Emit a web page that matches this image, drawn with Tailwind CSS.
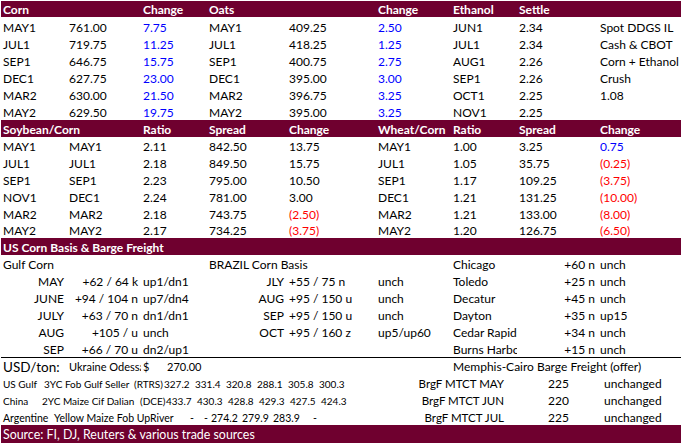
<!DOCTYPE html>
<html lang="en">
<head>
    <meta charset="UTF-8">
    <title>Grain Markets</title>
    <script src="https://cdn.jsdelivr.net/npm/@tailwindcss/browser@4"></script>
</head>
<body class="bg-white w-[682px] h-[444px] overflow-hidden pt-px pl-px font-['Lato','Liberation_Sans',sans-serif] text-[12px] text-black">
    <table class="table-fixed w-[680px] border-collapse [&_td]:p-0 [&_td]:pl-[2px] [&_td]:pr-[3px] [&_td]:align-bottom [&_td]:overflow-hidden [&_td]:whitespace-nowrap [&_td]:leading-[14px]">
        <colgroup>
            <col class="w-[66px]"><col class="w-[74px]"><col class="w-[66px]"><col class="w-[80px]"><col class="w-[89px]"><col class="w-[75px]"><col class="w-[66px]"><col class="w-[81px]"><col class="w-[83px]">
        </colgroup>
        <tbody>
            <!-- futures -->
            <tr class="h-[16px] bg-[#6f002f] text-white font-bold"><td>Corn</td><td></td><td>Change</td><td>Oats</td><td></td><td>Change</td><td>Ethanol</td><td>Settle</td><td></td></tr>
            <tr class="h-[18px]"><td>MAY1</td><td>761.00</td><td class="text-[#0000ff]">7.75</td><td>MAY1</td><td>409.25</td><td class="text-[#0000ff]">2.50</td><td>JUN1</td><td>2.34</td><td>Spot DDGS IL</td></tr>
            <tr class="h-[17px]"><td>JUL1</td><td>719.75</td><td class="text-[#0000ff]">11.25</td><td>JUL1</td><td>418.25</td><td class="text-[#0000ff]">1.25</td><td>JUL1</td><td>2.34</td><td>Cash &amp; CBOT</td></tr>
            <tr class="h-[17px]"><td>SEP1</td><td>646.75</td><td class="text-[#0000ff]">15.75</td><td>SEP1</td><td>400.75</td><td class="text-[#0000ff]">2.75</td><td>AUG1</td><td>2.26</td><td>Corn + Ethanol</td></tr>
            <tr class="h-[17px]"><td>DEC1</td><td>627.75</td><td class="text-[#0000ff]">23.00</td><td>DEC1</td><td>395.00</td><td class="text-[#0000ff]">3.00</td><td>SEP1</td><td>2.26</td><td>Crush</td></tr>
            <tr class="h-[17px]"><td>MAR2</td><td>630.00</td><td class="text-[#0000ff]">21.50</td><td>MAR2</td><td>396.75</td><td class="text-[#0000ff]">3.25</td><td>OCT1</td><td>2.25</td><td>1.08</td></tr>
            <tr class="h-[17px]"><td>MAY2</td><td>629.50</td><td class="text-[#0000ff]">19.75</td><td>MAY2</td><td>395.00</td><td class="text-[#0000ff]">3.25</td><td>NOV1</td><td>2.25</td><td></td></tr>
            <!-- spreads -->
            <tr class="h-[17px] bg-[#6f002f] text-white font-bold"><td colspan="2">Soybean/Corn</td><td>Ratio</td><td>Spread</td><td>Change</td><td>Wheat/Corn</td><td>Ratio</td><td>Spread</td><td>Change</td></tr>
            <tr class="h-[17px]"><td>MAY1</td><td>MAY1</td><td>2.11</td><td>842.50</td><td>13.75</td><td>MAY1</td><td>1.00</td><td>3.25</td><td class="text-[#0000ff]">0.75</td></tr>
            <tr class="h-[17px]"><td>JUL1</td><td>JUL1</td><td>2.18</td><td>849.50</td><td>15.75</td><td>JUL1</td><td>1.05</td><td>35.75</td><td class="text-[#ff0000]">(0.25)</td></tr>
            <tr class="h-[17px]"><td>SEP1</td><td>SEP1</td><td>2.23</td><td>795.00</td><td>10.50</td><td>SEP1</td><td>1.17</td><td>109.25</td><td class="text-[#ff0000]">(3.75)</td></tr>
            <tr class="h-[17px]"><td>NOV1</td><td>DEC1</td><td>2.24</td><td>781.00</td><td>3.00</td><td>DEC1</td><td>1.21</td><td>131.25</td><td class="text-[#ff0000]">(10.00)</td></tr>
            <tr class="h-[17px]"><td>MAR2</td><td>MAR2</td><td>2.18</td><td>743.75</td><td class="text-[#ff0000]">(2.50)</td><td>MAR2</td><td>1.21</td><td>133.00</td><td class="text-[#ff0000]">(8.00)</td></tr>
            <tr class="h-[16px] [&_td]:leading-[12px]"><td>MAY2</td><td>MAY2</td><td>2.17</td><td>734.25</td><td class="text-[#ff0000]">(3.75)</td><td>MAY2</td><td>1.20</td><td>126.75</td><td class="text-[#ff0000]">(6.50)</td></tr>
            <!-- basis and freight -->
            <tr class="h-[17px] bg-[#6f002f] text-white font-bold"><td colspan="9">US Corn Basis &amp; Barge Freight</td></tr>
            <tr class="h-[17px]"><td colspan="3">Gulf Corn</td><td colspan="3">BRAZIL Corn Basis</td><td>Chicago</td><td class="text-right">+60 n</td><td>unch</td></tr>
            <tr class="h-[17px]"><td class="text-right">MAY</td><td class="text-right">+62 / 64 k</td><td>up1/dn1</td><td class="text-right">JLY</td><td>+55 / 75 n</td><td>unch</td><td>Toledo</td><td class="text-right">+25 n</td><td>unch</td></tr>
            <tr class="h-[17px]"><td class="text-right">JUNE</td><td class="text-right">+94 / 104 n</td><td>up7/dn4</td><td class="text-right">AUG</td><td>+95 / 150 u</td><td>unch</td><td>Decatur</td><td class="text-right">+45 n</td><td>unch</td></tr>
            <tr class="h-[17px]"><td class="text-right">JULY</td><td class="text-right">+63 / 70 n</td><td>dn1/dn1</td><td class="text-right">SEP</td><td>+95 / 150 u</td><td>unch</td><td>Dayton</td><td class="text-right">+35 n</td><td>up15</td></tr>
            <tr class="h-[17px]"><td class="text-right">AUG</td><td class="text-right">+105 / u</td><td>unch</td><td class="text-right">OCT</td><td>+95 / 160 z</td><td>up5/up60</td><td>Cedar Rapids</td><td class="text-right">+34 n</td><td>unch</td></tr>
            <tr class="h-[17px] border-b border-black"><td class="text-right">SEP</td><td class="text-right">+66 / 70 u</td><td>dn2/up1</td><td></td><td></td><td></td><td>Burns Harbor</td><td class="text-right">+15 n</td><td>unch</td></tr>
            <!-- cash prices -->
            <tr class="h-[17px]"><td class="text-[13.5px]">USD/ton:</td><td class="text-[11px]">Ukraine Odessa</td><td colspan="4" class="text-[11px]"><div class="flex"><span class="w-[24px]">$</span><span>270.00</span></div></td><td colspan="3">Memphis-Cairo Barge Freight (offer)</td></tr>
            <tr class="h-[17px]"><td colspan="5" class="text-[10px]"><div class="flex"><span class="w-[41px]">US Gulf</span><span class="w-[90px]">3YC Fob Gulf Seller</span><span class="w-[30px]">(RTRS)</span><span class="w-[31px]">327.2</span><span class="w-[31px]">331.4</span><span class="w-[31px]">320.8</span><span class="w-[31px]">288.1</span><span class="w-[31px]">305.8</span><span>300.3</span></div></td><td colspan="2" class="text-right text-[11.5px]"><div class="pr-[10px]">BrgF MTCT MAY</div></td><td><div class="pl-[29px]">225</div></td><td><div class="pl-[4px]">unchanged</div></td></tr>
            <tr class="h-[17px]"><td colspan="5" class="text-[10px]"><div class="flex"><span class="w-[39px]">China</span><span class="w-[98px]">2YC Maize Cif Dalian</span><span class="w-[26px]">(DCE)</span><span class="w-[31px]">433.7</span><span class="w-[31px]">430.3</span><span class="w-[31px]">428.8</span><span class="w-[31px]">429.3</span><span class="w-[31px]">427.5</span><span>424.3</span></div></td><td colspan="2" class="text-right text-[11.5px]"><div class="pr-[10px]">BrgF MTCT JUN</div></td><td><div class="pl-[29px]">220</div></td><td><div class="pl-[4px]">unchanged</div></td></tr>
            <tr class="h-[17px]"><td colspan="5" class="text-[10.5px]"><div class="flex"><span class="w-[51px]">Argentine</span><span class="w-[136px]">Yellow Maize Fob UpRiver</span><span class="w-[14px]">-</span><span class="w-[7px]">-</span><span class="w-[31px]">274.2</span><span class="w-[31px]">279.9</span><span class="w-[40px]">283.9</span><span>-</span></div></td><td colspan="2" class="text-right text-[11.5px]"><div class="pr-[10px]">BrgF MTCT JUL</div></td><td><div class="pl-[29px]">225</div></td><td><div class="pl-[4px]">unchanged</div></td></tr>
            <tr class="h-[18px] bg-[#6f002f] text-white text-[12.4px]"><td colspan="9"><div class="pb-px">Source: FI, DJ, Reuters &amp; various trade sources</div></td></tr>
        </tbody>
    </table>
</body>
</html>
